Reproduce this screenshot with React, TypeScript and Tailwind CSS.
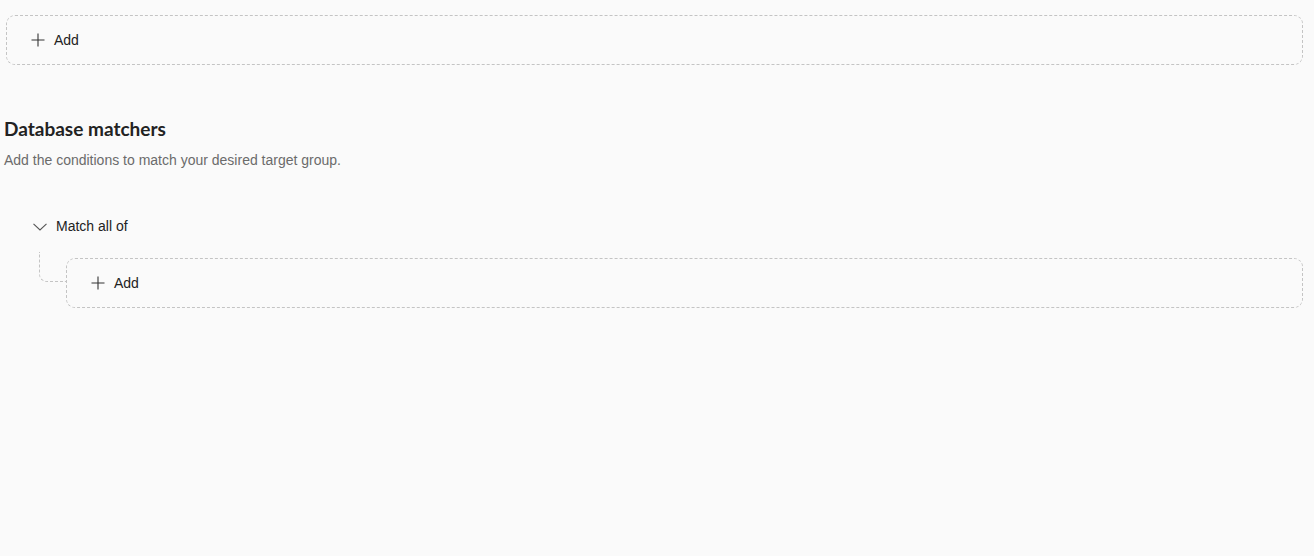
function PlusIcon() {
  return (
    <svg width="14" height="14" viewBox="0 0 14 14" fill="none" className="shrink-0">
      <path d="M7 0.5v13M0.5 7h13" stroke="#333333" strokeWidth="1.1" />
    </svg>
  );
}

function ChevronIcon() {
  return (
    <svg width="14" height="8" viewBox="0 0 14 8" fill="none" className="shrink-0">
      <path d="M0.5 0.8 7 7 13.5 0.8" stroke="#555555" strokeWidth="1.1" />
    </svg>
  );
}

function AddBox() {
  return (
    <button
      type="button"
      className="flex h-[50px] w-full items-center gap-[9px] rounded-[9px] border border-dashed border-[#c4c4c4] pl-[24px] text-left text-[14px] text-[#222222]"
    >
      <PlusIcon />
      <span>Add</span>
    </button>
  );
}

export default function App() {
  return (
    <div className="min-h-[556px] w-full bg-[#fafafa] font-['Liberation_Sans',Arial,sans-serif]">
      <div className="w-[1303px] pt-[15px] pl-[6px]">
        <AddBox />
      </div>

      <section className="pt-[52px] pl-[4px]">
        <h2 className="font-['Lato','Liberation_Sans',sans-serif] text-[19px] font-bold leading-[24px] text-[#222222]">
          Database matchers
        </h2>
        <p className="mt-[10px] text-[14px] leading-[18px] text-[#6b6b6b]">
          Add the conditions to match your desired target group.
        </p>
      </section>

      <div className="w-[1303px] pt-[47px] pl-[33px]">
        <div className="flex items-center gap-[9px] text-[14px] text-[#222222]">
          <ChevronIcon />
          <span>Match all of</span>
        </div>
        <div className="mt-[21px] flex">
          <div className="w-[33px] shrink-0 pl-[6px]">
            <div className="mt-[-6px] h-[30px] w-[27px] rounded-bl-[8px] border-b border-l border-dashed border-[#c4c4c4]" />
          </div>
          <div className="flex-1">
            <AddBox />
          </div>
        </div>
      </div>
    </div>
  );
}
